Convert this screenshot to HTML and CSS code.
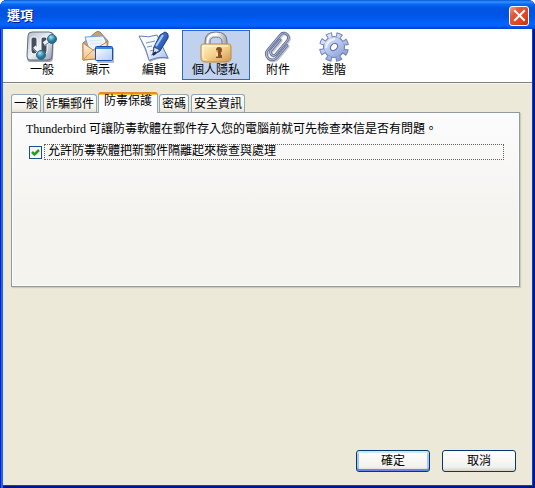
FILE: index.html
```
<!DOCTYPE html>
<html lang="zh-Hant">
<head>
<meta charset="utf-8">
<title>選項</title>
<link rel="stylesheet" href="styles.css">
</head>
<body>
<main class="window">
  <header class="titlebar">
    <h1 class="title">選項</h1>
    <button class="close" type="button" aria-label="關閉">
      <svg width="13" height="13" viewBox="0 0 13 13"><path d="M2 2L11 11M11 2L2 11" stroke="#fff" stroke-width="2" stroke-linecap="square"/></svg>
    </button>
  </header>
  <div class="client">
    <nav class="toolbar">
      <button class="tool" type="button">
        <svg class="icon" viewBox="0 0 32 32">
          <defs>
            <linearGradient id="plate" x2="1" y2="1"><stop stop-color="#b4bbc9"/><stop offset=".5" stop-color="#edf0f5"/><stop offset="1" stop-color="#949eaf"/></linearGradient>
            <radialGradient id="knob" cx=".38" cy=".3"><stop stop-color="#b8e5f4"/><stop offset=".5" stop-color="#58aac7"/><stop offset="1" stop-color="#28708e"/></radialGradient>
          </defs>
          <path d="M4 31Q1 31 1 27L2 5Q2 2 6 1H24Q28 1 28 5L27 27Q27 31 23 31Z" fill="#9da4b1"/>
          <path d="M4 29Q1 29 1 25L2 5Q2 1 6 1H23Q27 1 27 5L26 25Q26 29 22 29Z" fill="url(#plate)" stroke="#626c80"/>
          <path d="M5 8Q5 6 7 6H9Q11 6 11 8V20Q11 23 8 23Q5 23 5 20Z" fill="#454e5d" stroke="#fff"/>
          <path d="M15 8Q15 6 17 6H19Q21 6 21 8V20Q21 23 18 23Q15 23 15 20Z" fill="#454e5d" stroke="#fff"/>
          <path d="M8 16L15 23M18 13L25 8" stroke="#eef2f7" stroke-width="4"/>
          <path d="M7 17L14 24M18 15L26 9" stroke="#667285"/>
          <circle cx="15" cy="24" r="4.500" fill="url(#knob)" stroke="#2b6e8a"/>
          <circle cx="26" cy="8" r="4.500" fill="url(#knob)" stroke="#2b6e8a"/>
        </svg>
        <span>一般</span>
      </button>
      <button class="tool" type="button">
        <svg class="icon" viewBox="0 0 32 32">
          <defs>
            <linearGradient id="env" x2="0" y2="1"><stop stop-color="#fff5df"/><stop offset="1" stop-color="#efc187"/></linearGradient>
            <linearGradient id="win" x2="1" y2="1"><stop stop-color="#fff"/><stop offset="1" stop-color="#a9cdf8"/></linearGradient>
          </defs>
          <path d="M1 12L14 1Q16 0 18 1L26 10L25 27L1 29Z" fill="#c4a27a" stroke="#9c7d56"/>
          <path d="M3 6L21 5L24 10L20 21H8Z" fill="#eef5ff" stroke="#779ed8"/>
          <path d="M7 10L20 9M8 13L20 12" stroke="#dbe7f8"/>
          <path d="M1 12L11 19L25 11V27L1 29Z" fill="url(#env)" stroke="#c18547"/>
          <path d="M1 29L11 19L24 27" fill="none" stroke="#d59f5f"/>
          <rect x="15" y="17" width="17" height="15" rx="1" fill="#7c8090" opacity=".55"/>
          <rect x="13.500" y="15.500" width="17" height="14" rx="1" fill="url(#win)" stroke="#174fae"/>
          <path d="M14 16H30V18H14Z" fill="#3b83e7"/>
        </svg>
        <span>顯示</span>
      </button>
      <button class="tool" type="button">
        <svg class="icon" viewBox="0 0 32 32">
          <defs>
            <linearGradient id="paper" x2="1" y2="1"><stop stop-color="#fff"/><stop offset=".5" stop-color="#f0f5ff"/><stop offset="1" stop-color="#9eb9ed"/></linearGradient>
            <linearGradient id="pen" x2="1" y2="1"><stop stop-color="#719eea"/><stop offset=".5" stop-color="#3467c2"/><stop offset="1" stop-color="#17377f"/></linearGradient>
          </defs>
          <path d="M1 5Q11 8 19 5L31 28Q21 26 12 31Z" fill="#81899c" opacity=".7"/>
          <path d="M1 5Q11 7 19 4L30 27Q20 25 11 29.500Q9 18 1 5Z" fill="url(#paper)" stroke="#6580b6"/>
          <path d="M8 12L17 10M9 16L14 15M12 20L20 18M13 24L18 23" stroke="#7f91b4"/>
          <path d="M22 4L27 1Q31 2 30 7L22 20L15 24L16 16Z" fill="url(#pen)" stroke="#183e88"/>
          <path d="M16 16L22 19L15 24Z" fill="#d9e2f3" stroke="#354b7c"/>
          <path d="M25 4L18 15" stroke="#a9c9ff" stroke-width="2"/>
          <path d="M15 24L18 21" stroke="#192955" stroke-width="2"/>
        </svg>
        <span>編輯</span>
      </button>
      <button class="tool selected" type="button" aria-pressed="true">
        <svg class="icon" viewBox="0 0 32 32">
          <defs>
            <linearGradient id="lock" x2="1" y2="1"><stop stop-color="#fff4cb"/><stop offset=".5" stop-color="#f5d18b"/><stop offset="1" stop-color="#d0964f"/></linearGradient>
            <linearGradient id="steel"><stop stop-color="#a5aab3"/><stop offset=".5" stop-color="#fff"/><stop offset="1" stop-color="#9ca2ad"/></linearGradient>
          </defs>
          <path d="M5 17V10Q5 1 16 1Q27 1 27 10V17H22V11Q22 6 16 6Q10 6 10 11V17Z" fill="url(#steel)" stroke="#747984"/>
          <path d="M7.500 15V10Q8 4 15 3" fill="none" stroke="#fff" stroke-width="2"/>
          <path d="M1 15Q1 13 3 13H29Q31 13 31 16V28Q30 31 26 31H6Q1 31 1 27Z" fill="url(#lock)" stroke="#b98a4b"/>
          <path d="M3 15H28M3 16V26Q4 29 7 29" fill="none" stroke="#fff9df"/>
          <circle cx="19" cy="19" r="3" fill="#855023"/>
          <path d="M18 20H21V24H22V27H16V25H18Z" fill="#855023"/>
          <path d="M17 19V26" stroke="#fff0b7"/>
        </svg>
        <span>個人隱私</span>
      </button>
      <button class="tool" type="button">
        <svg class="icon" viewBox="0 0 32 32">
          <g fill="none" stroke-linecap="round">
            <path transform="translate(1 1) rotate(40 16 16)" d="M13 9V23A3 3 0 0 0 19 23V5A4.500 4.500 0 0 0 10 5V25A6 6 0 0 0 22 25V9" stroke="#c5c8d0" stroke-width="3"/>
            <path transform="rotate(40 16 16)" d="M13 9V23A3 3 0 0 0 19 23V5A4.500 4.500 0 0 0 10 5V25A6 6 0 0 0 22 25V9" stroke="#5b6990" stroke-width="2.600"/>
            <path transform="rotate(40 16 16)" d="M13 9V23A3 3 0 0 0 19 23V5A4.500 4.500 0 0 0 10 5V25A6 6 0 0 0 22 25V9" stroke="#b3c0e0"/>
          </g>
        </svg>
        <span>附件</span>
      </button>
      <button class="tool" type="button">
        <svg class="icon" viewBox="0 0 32 32">
          <defs><linearGradient id="gear" gradientUnits="userSpaceOnUse" x1="4" y1="4" x2="28" y2="28"><stop stop-color="#e8efff"/><stop offset=".5" stop-color="#b5c5ee"/><stop offset="1" stop-color="#8096d0"/></linearGradient></defs>
          <g transform="rotate(10 16 16)">
            <circle cx="16" cy="16" r="12" fill="none" stroke="#7084b8" stroke-width="6" pathLength="80" stroke-dasharray="6 4"/>
            <circle cx="16" cy="16" r="11" fill="#7084b8"/>
            <circle cx="16" cy="16" r="12" fill="none" stroke="url(#gear)" stroke-width="4" pathLength="80" stroke-dasharray="4 6" stroke-dashoffset="-1"/>
            <circle cx="16" cy="16" r="10" fill="url(#gear)"/>
          </g>
          <path d="M8 17Q9 9 17 8" fill="none" stroke="#edf2ff" stroke-width="2"/>
          <ellipse cx="16" cy="16" rx="4" ry="3" transform="rotate(-45 16 16)" fill="#fff" stroke="#5b6ea6"/>
        </svg>
        <span>進階</span>
      </button>
    </nav>
    <section class="content">
      <div class="tabs" role="tablist">
        <button class="tab" type="button" role="tab">一般</button>
        <button class="tab" type="button" role="tab">詐騙郵件</button>
        <button class="tab active" type="button" role="tab" aria-selected="true">防毒保護</button>
        <button class="tab" type="button" role="tab">密碼</button>
        <button class="tab" type="button" role="tab">安全資訊</button>
      </div>
      <div class="panel" role="tabpanel">
        <p class="intro">Thunderbird 可讓防毒軟體在郵件存入您的電腦前就可先檢查來信是否有問題。</p>
        <div class="option">
          <input class="check" id="quarantine" type="checkbox" checked>
          <label class="option-label" for="quarantine">允許防毒軟體把新郵件隔離起來檢查與處理</label>
        </div>
      </div>
    </section>
    <footer class="actions">
      <button class="action default" type="button">確定</button>
      <button class="action" type="button">取消</button>
    </footer>
  </div>
</main>
</body>
</html>
```

FILE: styles.css
```
* { box-sizing: border-box; }

body {
  margin: 0;
  background: #fff;
  color: #000;
  font: 12px/16px "Liberation Serif", "Noto Sans CJK TC", serif;
}

button {
  font: inherit;
  color: inherit;
  padding: 0;
}

.window {
  display: flex;
  flex-direction: column;
  min-height: 100vh;
  padding: 0 3px 3px;
  border-radius: 7px 7px 0 0;
  background: #0831d9;
  box-shadow: inset 1px 0 #0019cf, inset 3px 0 #166aee, inset -2px -2px #00138c, inset -3px -3px #0441d8;
}

.titlebar {
  display: flex;
  align-items: center;
  justify-content: space-between;
  height: 29px;
  margin: 0 -3px;
  padding: 2px 6px 0 7px;
  border-radius: 7px 7px 0 0;
  background: linear-gradient(#0058d6 0, #3a91ff 2px, #086cf5 4px, #0054e3 8px, #0055e6 16px, #0264ff 24px, #005ff5 26px, #003dcc 29px);
}

.title {
  margin: 0;
  color: #fff;
  font-size: 13px;
  font-weight: 700;
  text-shadow: 1px 1px #0a1883;
}

.close {
  display: grid;
  place-items: center;
  width: 20px;
  height: 20px;
  border: 1px solid #fff;
  border-radius: 3px;
  background: linear-gradient(135deg, #f0a08a, #e2583a 30%, #dc4520 70%, #b83410);
}

.client {
  flex: 1;
  display: flex;
  flex-direction: column;
  background: #ece9d8;
}

.toolbar {
  display: flex;
  height: 54px;
  padding: 1px 11px 2px;
  background: #fff;
  border-bottom: 1px solid #808080;
  box-shadow: 0 1px #f8f6ee;
}

.tool {
  display: flex;
  flex-direction: column;
  align-items: center;
  min-width: 56px;
  padding: 0 9px;
  border: 1px solid transparent;
  background: none;
}

.tool.selected {
  border-color: #316ac5;
  background: #c1d2ee;
}

.tool span {
  line-height: 14px;
}

.icon {
  flex: none;
  width: 32px;
  height: 32px;
}

.content {
  padding: 8px 12px 0 8px;
}

.tabs {
  display: flex;
  align-items: flex-end;
  gap: 2px;
  height: 21px;
}

.tab {
  height: 18px;
  padding: 0 2px;
  border: 1px solid #91a7b4;
  border-bottom: 0;
  border-radius: 3px 3px 0 0;
  background: linear-gradient(#fff, #f2f1e8 80%, #e4e1d2);
  line-height: 14px;
}

.tab.active {
  position: relative;
  z-index: 1;
  height: 21px;
  margin: 0 -1px -1px;
  padding: 0 5px 5px;
  border-top: 2px solid #e68b2c;
  background: linear-gradient(#ffc73c 0, #ffc73c 1px, #fcfcfe 1px);
}

.panel {
  min-height: 175px;
  padding: 8px 15px 8px 14px;
  border: 1px solid #919b9c;
  background: linear-gradient(#fcfcfe, #f4f3ee 60%);
  box-shadow: inset 0 0 0 1px #fcfcfe, 1px 1px 1px #cdcbbb;
}

.intro {
  margin: 0 0 7px;
}

.option {
  display: flex;
  align-items: center;
  gap: 2px;
  padding-left: 3px;
}

.check {
  appearance: none;
  width: 13px;
  height: 13px;
  margin: 0;
  border: 1px solid #1c5180;
  background: linear-gradient(135deg, #dcdcd7, #fff);
}

.check:checked {
  background: url('data:image/svg+xml,<svg xmlns="http://www.w3.org/2000/svg" viewBox="0 0 11 11"><path d="M2 5L4.500 7.500L9 3" fill="none" stroke="%2321a121" stroke-width="2.500"/></svg>') center / 11px 11px no-repeat, linear-gradient(135deg, #f0f0ec, #fff);
}

.option-label {
  flex: 1;
  height: 16px;
  padding-left: 3px;
  border: 1px dotted #66645a;
  line-height: 12px;
}

.actions {
  display: flex;
  justify-content: flex-end;
  gap: 12px;
  margin-top: auto;
  padding: 12px 16px 13px;
}

.action {
  width: 74px;
  height: 22px;
  border: 1px solid #003c74;
  border-radius: 3px;
  background: linear-gradient(#fff, #f2f1ec 80%, #d6d0c5);
  line-height: 16px;
}

.action.default {
  box-shadow: inset 0 2px #cee7ff, inset 0 -2px #6982ee, inset 2px 0 #a9c5f4, inset -2px 0 #a9c5f4;
}
```
